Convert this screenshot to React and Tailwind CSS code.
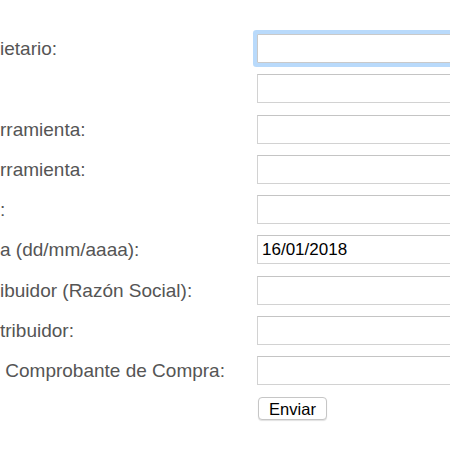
import React from "react";

const rows = [
  { label: "ietario:", focus: true },
  { label: "" },
  { label: "rramienta:" },
  { label: "rramienta:" },
  { label: ":" },
  { label: "a (dd/mm/aaaa):", value: "16/01/2018" },
  { label: "ibuidor (Razón Social):" },
  { label: "tribuidor:" },
  { label: " Comprobante de Compra:" },
];

const App = () => {
  return (
    <div className="w-[450px] h-[450px] overflow-hidden bg-white font-['Liberation_Sans',Arial,sans-serif]">
      <form className="pt-[34px] pl-[0px]" onSubmit={(e) => e.preventDefault()}>
        {rows.map((r, i) => (
          <div key={i} className="flex items-start h-[40.25px]">
            <label className="w-[257px] shrink-0 h-[29px] flex items-center whitespace-pre text-[19px] text-[#555] leading-none">
              {r.label}
            </label>
            <input
              type="text"
              defaultValue={r.value || ""}
              className={
                r.focus
                  ? "w-[220px] shrink-0 h-[29px] border border-[#c9c9c9] rounded-[1px] bg-white px-[4px] text-[17px] text-black outline-none shadow-[0_0_0_4px_#b9dafb]"
                  : "w-[220px] shrink-0 h-[29px] border border-[#d2d2d2] border-t-[#c4c4c4] bg-white px-[4px] text-[17px] text-black outline-none"
              }
            />
          </div>
        ))}
        <div className="flex pt-[1px]">
          <div className="w-[258px] shrink-0" />
          <button
            type="submit"
            className="w-[69px] h-[23px] border border-[#c6c6c6] rounded-[4px] bg-white text-[16.5px] leading-none text-black shadow-[0_1px_1px_rgba(0,0,0,0.12)]"
          >
            Enviar
          </button>
        </div>
      </form>
    </div>
  );
};

export default App;
